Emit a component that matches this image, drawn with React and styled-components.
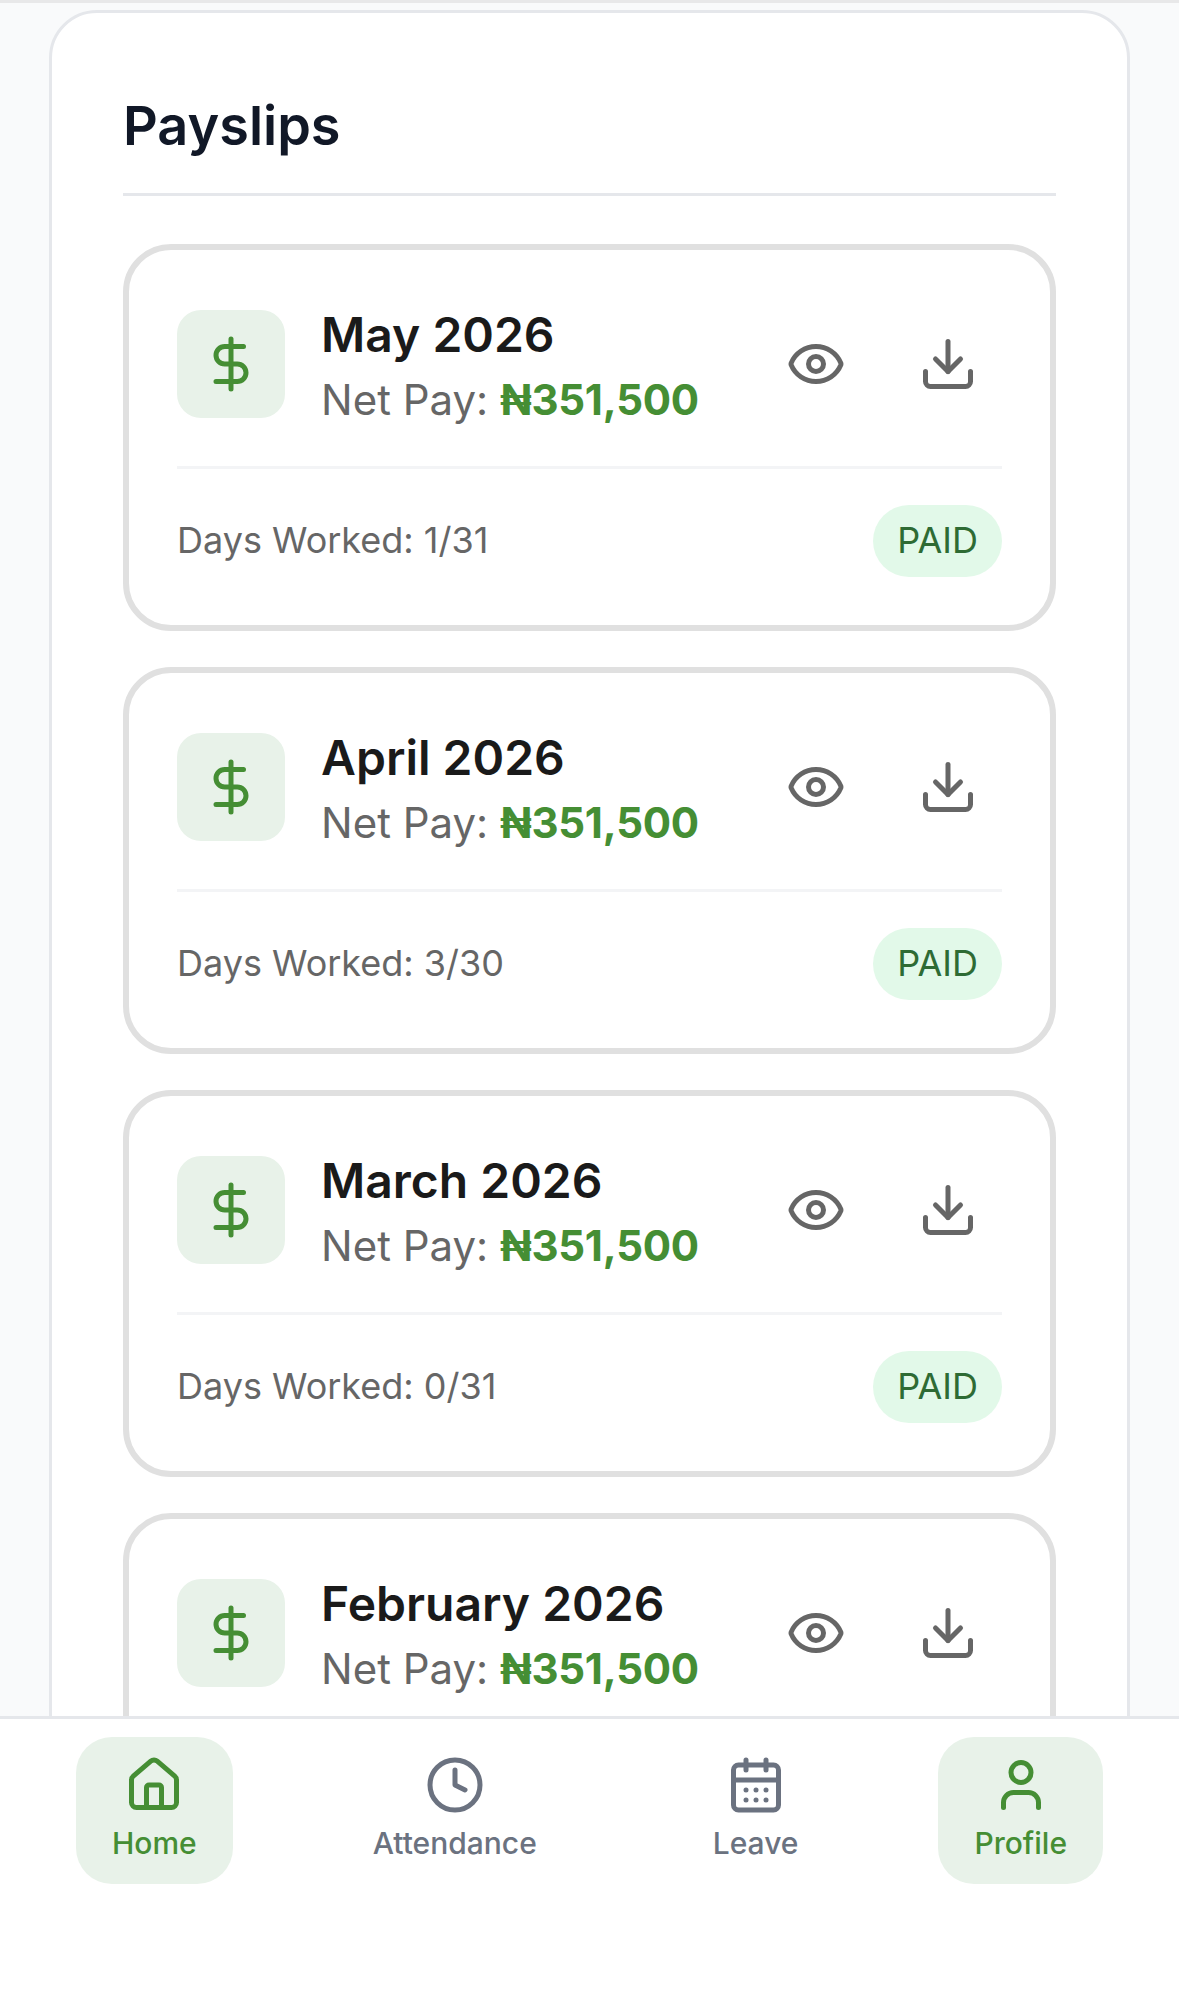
import styled, { createGlobalStyle } from 'styled-components'
import { DollarSign, Eye, Download, House, Clock, CalendarDays, User } from 'lucide-react'

const GlobalStyle = createGlobalStyle`
    html, body {
        margin: 0;
        padding: 0;
        background: #fff;
    }
    * {
        box-sizing: border-box;
    }
`

// the last card runs under the nav, its footer is never on screen
const payslips = [
    { month: 'May 2026', days: '1/31' },
    { month: 'April 2026', days: '3/30' },
    { month: 'March 2026', days: '0/31' },
    { month: 'February 2026' },
]

const navItems = [
    { label: 'Home', icon: House, active: true },
    { label: 'Attendance', icon: Clock },
    { label: 'Leave', icon: CalendarDays },
    { label: 'Profile', icon: User, active: true },
]

const App = () => {
    return (
        <Page>
            <GlobalStyle />
            <Scroll>
                <Panel>
                    <Title>Payslips</Title>
                    <List>
                        {payslips.map(item => (
                            <Card key={item.month}>
                                <Top>
                                    <IconBox>
                                        <DollarSign size={60} strokeWidth={2} />
                                    </IconBox>
                                    <Info>
                                        <Month>{item.month}</Month>
                                        <NetPay>
                                            Net Pay: <Amount>₦351,500</Amount>
                                        </NetPay>
                                    </Info>
                                    <Actions>
                                        <ActionButton aria-label="View">
                                            <Eye size={60} strokeWidth={2} />
                                        </ActionButton>
                                        <ActionButton aria-label="Download">
                                            <Download size={60} strokeWidth={2} />
                                        </ActionButton>
                                    </Actions>
                                </Top>
                                {item.days && (
                                    <Bottom>
                                        <Days>Days Worked: {item.days}</Days>
                                        <Status>PAID</Status>
                                    </Bottom>
                                )}
                            </Card>
                        ))}
                    </List>
                </Panel>
            </Scroll>
            <Nav>
                {navItems.map(({ label, icon: Icon, active }) => (
                    <NavItem key={label} $active={active}>
                        <Icon size={60} strokeWidth={2} />
                        <NavLabel>{label}</NavLabel>
                    </NavItem>
                ))}
            </Nav>
        </Page>
    )
}

const Page = styled.div`
    display: flex;
    flex-direction: column;
    height: 2004px;
    overflow: hidden;
    font-family: Inter, "Noto Sans", sans-serif;
    background: #f9fafb;
`

const Scroll = styled.main`
    flex: 1;
    min-height: 0;
    overflow: hidden;
    padding: 7px 49px 0 49px;
    border-top: 3px solid #e8e8e9;
`

const Panel = styled.section`
    background: #fff;
    border: 3px solid #e5e7eb;
    border-radius: 48px;
    padding: 80px 71px 72px;
`

const Title = styled.h1`
    margin: 0;
    height: 103px;
    border-bottom: 3px solid #e5e7eb;
    font-size: 54px;
    font-weight: 600;
    line-height: 65px;
    color: #111827;
`

const List = styled.div`
    display: flex;
    flex-direction: column;
    gap: 36px;
    margin-top: 48px;
`

const Card = styled.article`
    background: #fff;
    border: 6px solid #e0e0e0;
    border-radius: 48px;
    padding: 51px 48px 48px;
`

const Top = styled.div`
    display: flex;
    align-items: center;
    padding-bottom: 39px;
    border-bottom: 3px solid #f3f4f6;
`

const IconBox = styled.div`
    display: flex;
    align-items: center;
    justify-content: center;
    flex: none;
    width: 108px;
    height: 108px;
    border-radius: 24px;
    background: #e8f2e9;
    color: #458e34;
`

const Info = styled.div`
    flex: 1;
    min-width: 0;
    margin-left: 36px;
    padding-top: 7px;
`

const Month = styled.div`
    font-size: 48px;
    font-weight: 600;
    line-height: 54px;
    color: #1a1a1a;
`

const NetPay = styled.div`
    font-size: 42px;
    line-height: 54px;
    margin-top: 11px;
    color: #666;
`

const Amount = styled.span`
    font-weight: 700;
    letter-spacing: -0.3px;
    color: #458e34;
`

const Actions = styled.div`
    display: flex;
    gap: 24px;
`

const ActionButton = styled.button`
    display: flex;
    padding: 24px;
    border: none;
    background: none;
    color: #666;
`

const Bottom = styled.div`
    display: flex;
    align-items: center;
    justify-content: space-between;
    padding-top: 36px;
`

const Days = styled.span`
    padding-bottom: 2px;
    font-size: 36px;
    color: #666;
`

const Status = styled.span`
    padding: 0 24px 2px;
    height: 72px;
    display: flex;
    align-items: center;
    border-radius: 36px;
    background: #e2f9e9;
    font-size: 36px;
    color: #2e6b34;
`

const Nav = styled.nav`
    flex: none;
    display: flex;
    align-items: flex-start;
    justify-content: space-around;
    height: 288px;
    padding: 18px 24px 0;
    background: #fff;
    border-top: 3px solid #e5e7eb;
`

const NavItem = styled.div`
    display: flex;
    flex-direction: column;
    align-items: center;
    gap: 10px;
    height: 147px;
    padding: 18px 36px 0;
    border-radius: 36px;
    background: ${props => (props.$active ? '#e8f2e9' : 'transparent')};
    color: ${props => (props.$active ? '#458e34' : '#6b7280')};
`

const NavLabel = styled.span`
    font-size: 30px;
    font-weight: 500;
    line-height: 36px;
`

export default App
